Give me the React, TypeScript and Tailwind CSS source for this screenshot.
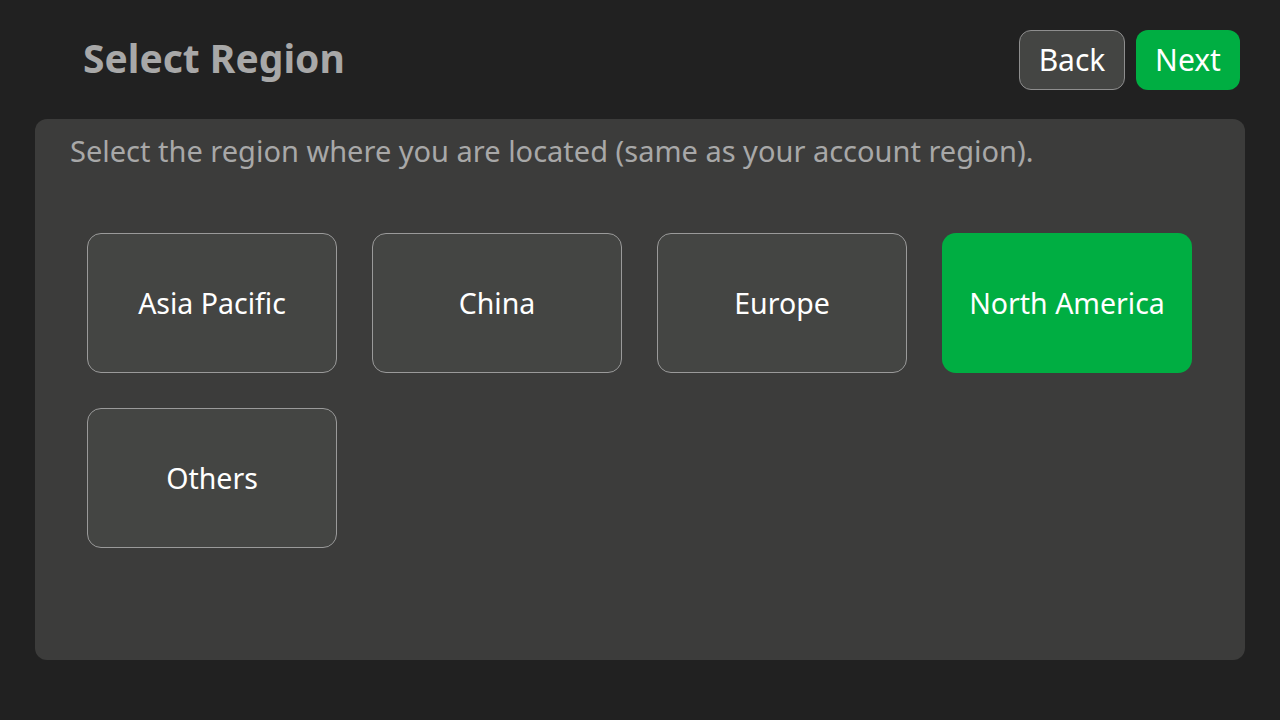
import { useState } from "react";

const regions = ["Asia Pacific", "China", "Europe", "North America", "Others"];

export default function App() {
  const [selected, setSelected] = useState("North America");

  return (
    <div
      className="w-[1280px] h-[720px] bg-[#212121] px-[35px] pt-[30px] flex flex-col"
      style={{ fontFamily: '"Noto Sans", "Open Sans", sans-serif' }}
    >
      {/* Header */}
      <div className="flex items-center justify-between h-[60px]">
        <h1 className="ml-[48px] pb-[6px] text-[39px] font-bold text-[#a8a8a8] leading-none">
          Select Region
        </h1>
        <div className="flex gap-[11px] mr-[5px]">
          <button className="w-[106px] h-[60px] rounded-[12px] border border-[#8e8e8e] bg-[#444543] text-white text-[30px] leading-none">
            Back
          </button>
          <button className="w-[104px] h-[60px] rounded-[12px] bg-[#00ae42] text-white text-[30px] leading-none">
            Next
          </button>
        </div>
      </div>

      {/* Panel */}
      <div className="mt-[29px] h-[541px] rounded-[12px] bg-[#3c3c3b] px-[52px]">
        <p className="-ml-[17px] mt-[13px] text-[29px] leading-[38px] text-[#a8a8a8]">
          Select the region where you are located (same as your account region).
        </p>
        <div className="mt-[63px] grid grid-cols-[repeat(4,250px)] gap-[35px]">
          {regions.map((r) => {
            const active = r === selected;
            return (
              <button
                key={r}
                onClick={() => setSelected(r)}
                className={
                  active
                    ? "h-[140px] rounded-[14px] bg-[#00ae42] text-white text-[28.5px]"
                    : "h-[140px] rounded-[14px] border border-[#9a9a9a] bg-[#444543] text-white text-[28.5px]"
                }
              >
                {r}
              </button>
            );
          })}
        </div>
      </div>
    </div>
  );
}
